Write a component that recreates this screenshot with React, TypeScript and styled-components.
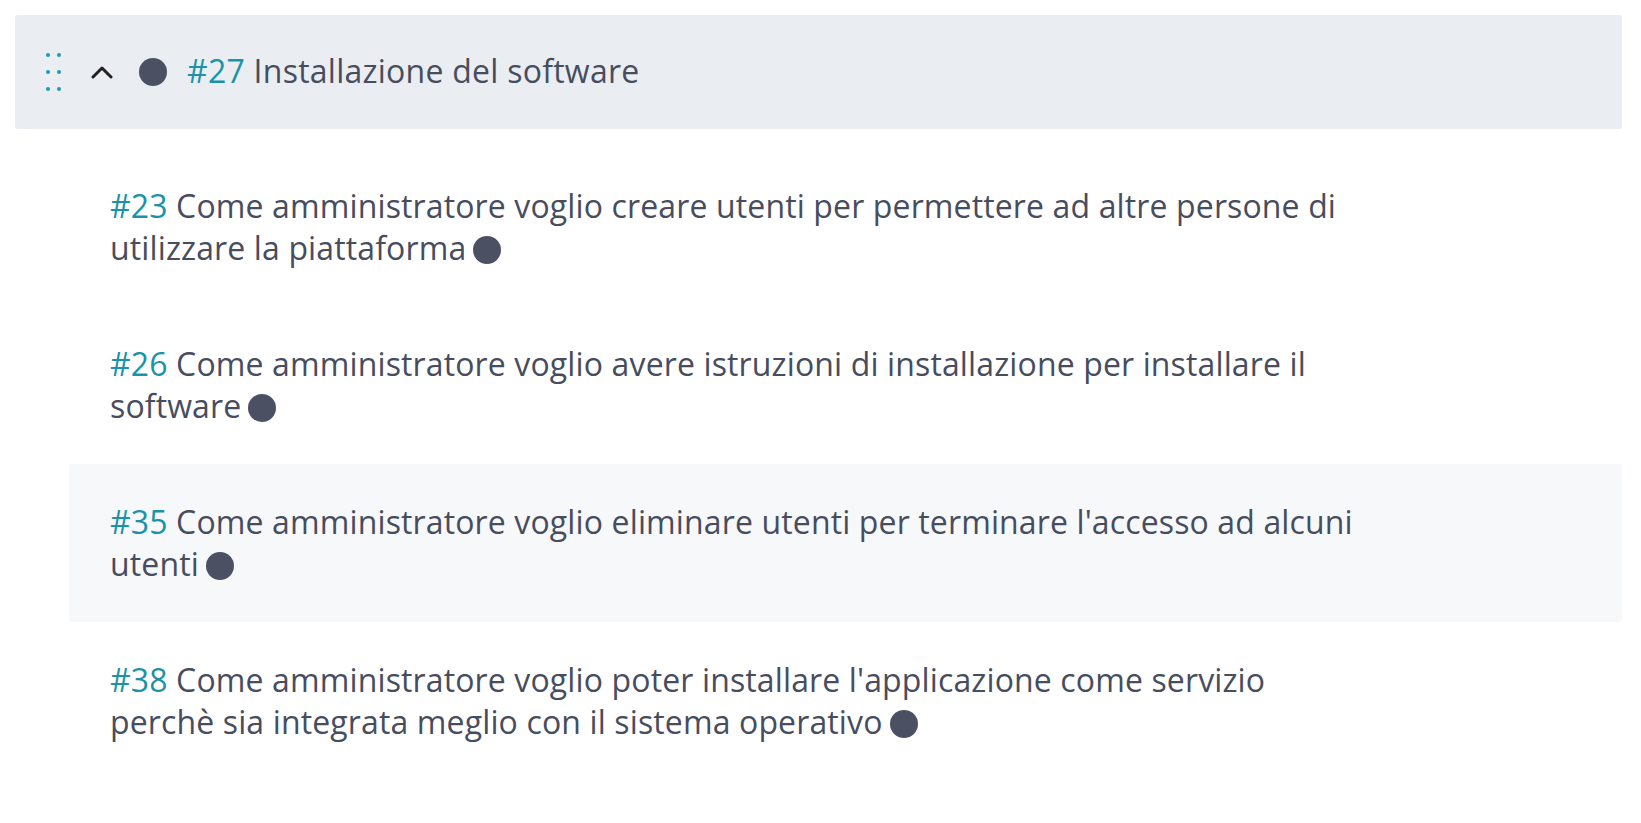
import React from "react";
import styled, { createGlobalStyle } from "styled-components";

const Global = createGlobalStyle`
  html, body { margin: 0; padding: 0; background: #ffffff; }
  body { font-family: "Open Sans", "Noto Sans", sans-serif; }
`;

const Page = styled.div`
  padding: 15px 19px 0 15px;
`;

const Header = styled.div`
  display: flex;
  align-items: center;
  height: 114px;
  background: #eaedf2;
  border-radius: 3px;
  padding-left: 31px;
`;

const Handle = styled.span`
  display: grid;
  grid-template-columns: 4px 4px;
  grid-template-rows: 4px 4px 4px;
  column-gap: 7px;
  row-gap: 13px;
  margin-right: 30px;
  span {
    width: 4px;
    height: 4px;
    border-radius: 50%;
    background: #1d9bb1;
  }
`;

const Chevron = styled.svg`
  width: 22px;
  height: 16px;
  margin-right: 26px;
  flex: none;
`;

const Dot = styled.span<{ $inline?: boolean }>`
  display: inline-block;
  width: 28px;
  height: 28px;
  border-radius: 50%;
  background: #4b5163;
  flex: none;
  vertical-align: ${(p) => (p.$inline ? "-4px" : "middle")};
  margin-left: ${(p) => (p.$inline ? "7px" : "0")};
  margin-right: ${(p) => (p.$inline ? "0" : "20px")};
`;

const Title = styled.span`
  font-size: 32px;
  color: #474d5e;
  letter-spacing: 0.25px;
  margin-top: -4px;
`;

const Num = styled.span`
  color: #1a93a9;
`;

const List = styled.div`
  margin-top: 19px;
  padding-left: 54px;
`;

const Row = styled.div<{ $active?: boolean }>`
  display: flex;
  align-items: center;
  height: 158px;
  padding-left: 41px;
  background: ${(p) => (p.$active ? "#f7f8fa" : "transparent")};
  border-radius: 3px;
`;

const Text = styled.div`
  max-width: 1262px;
  font-size: 32px;
  line-height: 42px;
  color: #474d5e;
  letter-spacing: 0.13px;
`;

const items = [
  { n: "#23", t: "Come amministratore voglio creare utenti per permettere ad altre persone di utilizzare la piattaforma" },
  { n: "#26", t: "Come amministratore voglio avere istruzioni di installazione per installare il software" },
  { n: "#35", t: "Come amministratore voglio eliminare utenti per terminare l'accesso ad alcuni utenti", active: true },
  { n: "#38", t: "Come amministratore voglio poter installare l'applicazione come servizio perchè sia integrata meglio con il sistema operativo" },
];

export default function App() {
  return (
    <Page>
      <Global />
      <Header>
        <Handle>
          <span /><span /><span /><span /><span /><span />
        </Handle>
        <Chevron viewBox="0 0 22 16">
          <path d="M2 13 L11 4 L20 13" fill="none" stroke="#222" strokeWidth="3" strokeLinecap="round" strokeLinejoin="round" />
        </Chevron>
        <Dot />
        <Title>
          <Num>#27</Num> Installazione del software
        </Title>
      </Header>
      <List>
        {items.map((it) => (
          <Row key={it.n} $active={it.active}>
            <Text>
              <Num>{it.n}</Num> {it.t}
              <Dot $inline />
            </Text>
          </Row>
        ))}
      </List>
    </Page>
  );
}
